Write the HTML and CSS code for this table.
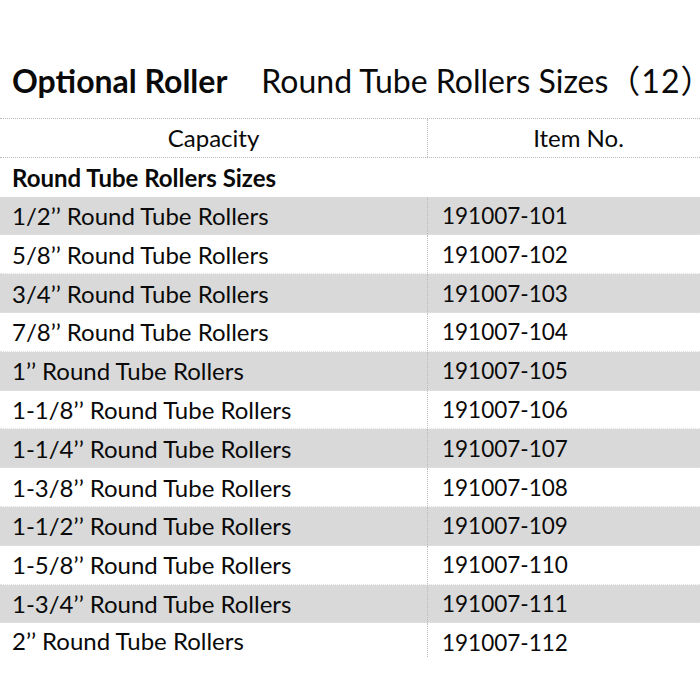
FILE: index.html
```html
<!DOCTYPE html>
<html>
<head>
<meta charset="utf-8">
<link rel="stylesheet" href="styles.css">
</head>
<body>
<div class="page">
  <h1 class="title"><span class="title-bold">Optional Roller</span><span class="title-sub">Round Tube Rollers Sizes<span class="paren">（12）</span></span></h1>
  <div class="table">
    <div class="row head"><div class="c1">Capacity</div><div class="c2">Item No.</div></div>
    <div class="row group"><div class="cfull">Round Tube Rollers Sizes</div></div>
    <div class="row gray"><div class="c1">1/2’’ Round Tube Rollers</div><div class="c2">191007-101</div></div>
    <div class="row"><div class="c1">5/8’’ Round Tube Rollers</div><div class="c2">191007-102</div></div>
    <div class="row gray"><div class="c1">3/4’’ Round Tube Rollers</div><div class="c2">191007-103</div></div>
    <div class="row"><div class="c1">7/8’’ Round Tube Rollers</div><div class="c2">191007-104</div></div>
    <div class="row gray"><div class="c1">1’’ Round Tube Rollers</div><div class="c2">191007-105</div></div>
    <div class="row"><div class="c1">1-1/8’’ Round Tube Rollers</div><div class="c2">191007-106</div></div>
    <div class="row gray"><div class="c1">1-1/4’’ Round Tube Rollers</div><div class="c2">191007-107</div></div>
    <div class="row"><div class="c1">1-3/8’’ Round Tube Rollers</div><div class="c2">191007-108</div></div>
    <div class="row gray"><div class="c1">1-1/2’’ Round Tube Rollers</div><div class="c2">191007-109</div></div>
    <div class="row"><div class="c1">1-5/8’’ Round Tube Rollers</div><div class="c2">191007-110</div></div>
    <div class="row gray"><div class="c1">1-3/4’’ Round Tube Rollers</div><div class="c2">191007-111</div></div>
    <div class="row last"><div class="c1">2’’ Round Tube Rollers</div><div class="c2">191007-112</div></div>
  </div>
</div>
</body>
</html>
```
FILE: styles.css
```css
html, body {
  margin: 0;
  padding: 0;
  background: #fff;
  overflow: hidden;
}
body {
  font-family: Lato, "Noto Sans CJK SC", sans-serif;
  color: #0a0a0a;
}
.page {
  width: 730px;
  padding-top: 60px;
}
.title {
  margin: 0 0 0 12px;
  height: 42px;
  line-height: 42px;
  font-weight: normal;
  white-space: nowrap;
  display: flex;
  gap: 34px;
}
.title-bold {
  font-weight: 700;
  font-size: 32px;
}
.title-sub {
  font-size: 32px;
}
.paren {
  font-size: 32px;
  letter-spacing: 1px;
}
.table {
  margin-top: 16px;
  border-top: 1px dotted #bbb;
}
.row {
  display: grid;
  grid-template-columns: 428px 301px;
  height: 38.8px;
  font-size: 24px;
  align-items: stretch;
  border-bottom: 1px dotted #e2e2e2;
  box-sizing: border-box;
}
.row > div {
  display: flex;
  align-items: center;
  padding-left: 12px;
}
.row .c1 {
  border-right: 1px dotted #bbb;
}
.row .c2 {
  padding-left: 14px;
  font-size: 22.5px;
}
.head {
  border-bottom: 1px dotted #bbb;
}
.head > div {
  justify-content: center;
  padding-left: 0;
}
.head .c2 { padding-left: 0; font-size: 24px; }
.group {
  grid-template-columns: 1fr;
  font-weight: 700;
  font-size: 24px;
  border-bottom: none;
}
.gray {
  background: #d9d9d9;
}
.last {
  border-bottom: none;
}
.last .c1 {
  height: 34px;
}
```
